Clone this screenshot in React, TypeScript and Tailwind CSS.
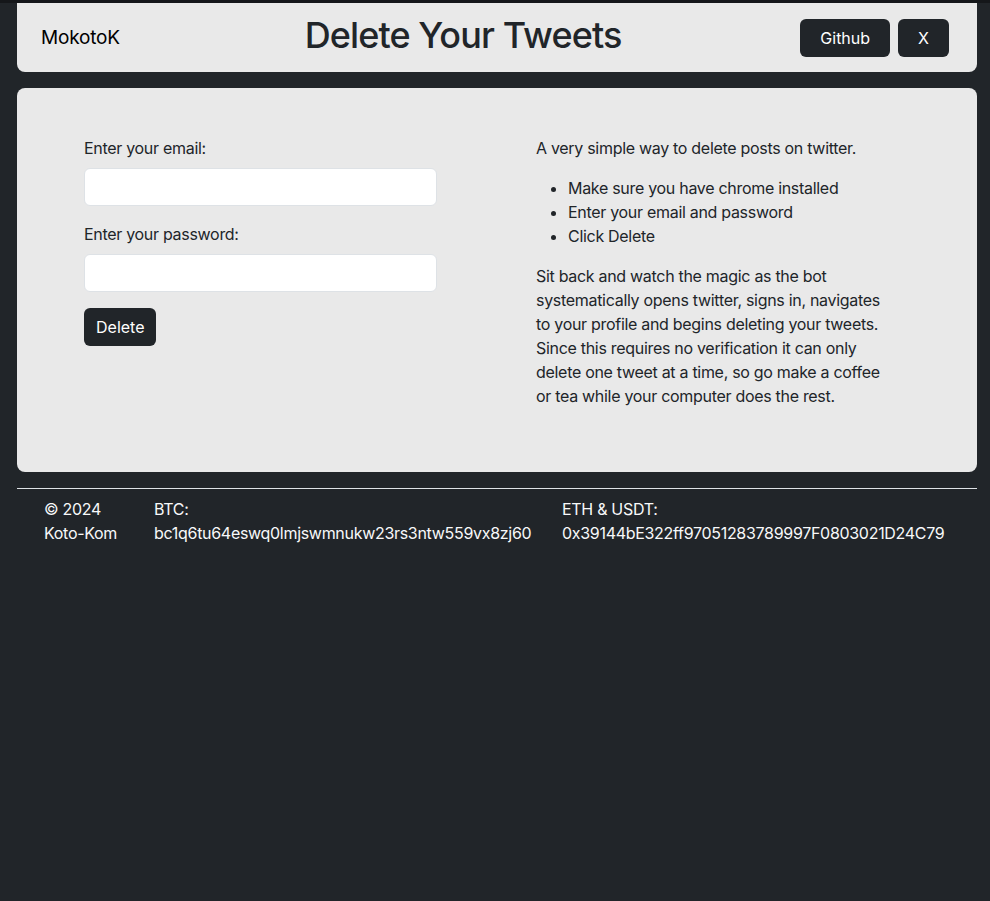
const font = { fontFamily: "Inter, 'Liberation Sans', sans-serif" };

const Header = () => {
  return (
    <header className="ml-[17px] mr-[13px] h-[69px] bg-[#e9e9e9] rounded-b-lg flex items-center justify-between pl-6 pr-7">
      <span className="text-[19px] tracking-[-0.2px] text-black leading-none">MokotoK</span>
      <h1 className="text-[36px] font-medium tracking-tight text-[#212529] leading-none ml-[6px] -mt-[6px]">
        Delete Your Tweets
      </h1>
      <div className="flex items-center gap-2 tracking-normal">
        <a href="#" className="h-[38px] px-5 flex items-center rounded-md bg-[#212529] text-white text-base">
          Github
        </a>
        <a href="#" className="h-[38px] px-5 flex items-center rounded-md bg-[#212529] text-white text-base">
          X
        </a>
      </div>
    </header>
  );
};

const Form = () => {
  return (
    <div className="w-[353px] flex flex-col">
      <label className="mb-2">Enter your email:</label>
      <input type="email" className="h-[38px] mb-4 bg-white border border-[#dee2e6] rounded-md px-3" />
      <label className="mb-2">Enter your password:</label>
      <input type="password" className="h-[38px] mb-4 bg-white border border-[#dee2e6] rounded-md px-3" />
      <div>
        <button className="h-[38px] px-3 rounded-md bg-[#212529] text-white tracking-normal">Delete</button>
      </div>
    </div>
  );
};

const About = () => {
  return (
    <div className="w-[352px]">
      <p className="mb-4">A very simple way to delete posts on twitter.</p>
      <ul className="mb-4 pl-8 list-disc">
        <li>Make sure you have chrome installed</li>
        <li>Enter your email and password</li>
        <li>Click Delete</li>
      </ul>
      <p className="mb-4">
        Sit back and watch the magic as the bot systematically opens twitter, signs in, navigates
        to your profile and begins deleting your tweets. Since this requires no verification it can
        only delete one tweet at a time, so go make a coffee or tea while your computer does the rest.
      </p>
    </div>
  );
};

export default function App() {
  return (
    <div className="min-h-screen bg-[#212529] text-base leading-6 tracking-[-0.3px] text-[#212529]" style={font}>
      <div className="h-[3px] bg-[#15171a]" />
      <Header />
      <main className="ml-[17px] mr-[13px] mt-4 bg-[#e9e9e9] rounded-lg pt-12 pb-12 pl-[67px] flex gap-[99px]">
        <Form />
        <About />
      </main>
      <hr className="ml-[17px] mr-[13px] mt-4 border-0 border-t border-[#dee2e6]" />
      <footer className="flex pl-[44px] pt-2 text-[#f8f9fa]">
        <div className="w-[110px]">
          <div>© 2024</div>
          <div>Koto-Kom</div>
        </div>
        <div className="w-[408px]">
          <div>BTC:</div>
          <div>bc1q6tu64eswq0lmjswmnukw23rs3ntw559vx8zj60</div>
        </div>
        <div>
          <div>ETH &amp; USDT:</div>
          <div>0x39144bE322ff97051283789997F0803021D24C79</div>
        </div>
      </footer>
    </div>
  );
}
